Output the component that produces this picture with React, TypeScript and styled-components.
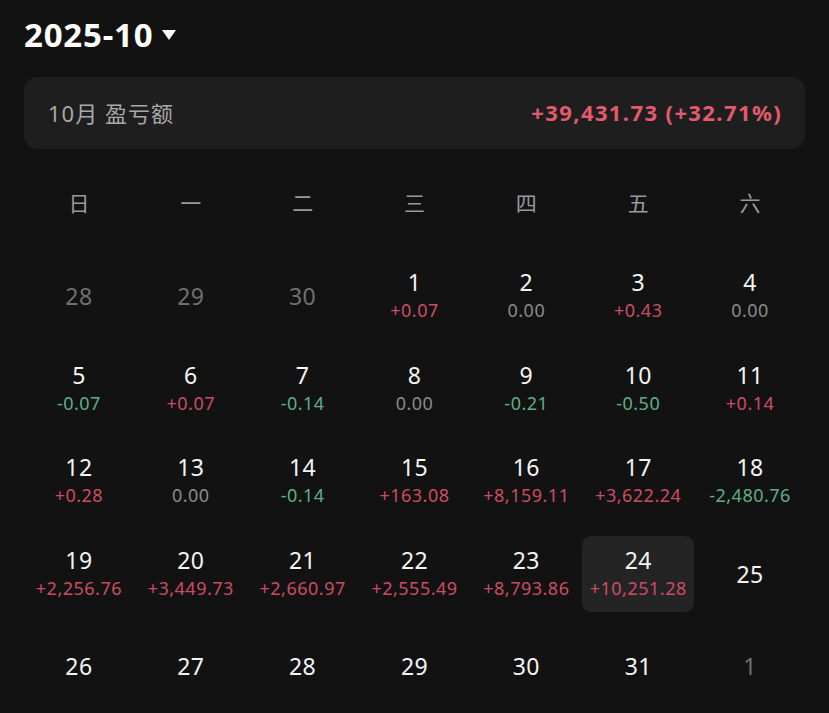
import styled, { createGlobalStyle } from 'styled-components';

const GlobalStyle = createGlobalStyle`
  html, body {
    margin: 0;
    padding: 0;
    background: #121212;
  }
  body {
    font-family: "Noto Sans", "Noto Sans CJK SC", sans-serif;
  }
`;

const Page = styled.div`
  padding: 15px 23px 0 23px;
  width: 829px;
  box-sizing: border-box;
`;

const MonthPicker = styled.div`
  display: flex;
  align-items: center;
  gap: 9px;
  height: 38px;
  padding-left: 1px;
  color: #ffffff;
  font-size: 33px;
  font-weight: 700;
  letter-spacing: 0.8px;
`;

const Caret = styled.span`
  width: 0;
  height: 0;
  border-left: 7px solid transparent;
  border-right: 7px solid transparent;
  border-top: 10px solid #ffffff;
  margin-top: 1px;
`;

const SummaryCard = styled.div`
  margin-top: 24px;
  height: 72px;
  margin-right: 1px;
  margin-left: 1px;
  border-radius: 14px;
  background: #1e1e1e;
  display: flex;
  align-items: center;
  justify-content: space-between;
  padding: 0 23px 3px 24px;
  box-sizing: border-box;
`;

const SummaryLabel = styled.span`
  color: #a8a8a8;
  font-size: 22px;
  letter-spacing: 1px;
`;

const SummaryValue = styled.span`
  color: #e35a6e;
  font-size: 22px;
  font-weight: 700;
  letter-spacing: 1.4px;
`;

const WeekRow = styled.div`
  margin-top: 29px;
  display: grid;
  grid-template-columns: repeat(7, 1fr);
  height: 50px;
  align-items: center;
`;

const WeekDay = styled.span`
  text-align: center;
  color: #9a9a9a;
  font-size: 21px;
  margin-top: -2px;
`;

const DayGrid = styled.div`
  margin-top: 30px;
  display: grid;
  grid-template-columns: repeat(7, 1fr);
  grid-auto-rows: 76px;
  row-gap: 16.5px;
`;

const DayCell = styled.div<{ $active?: boolean }>`
  display: flex;
  flex-direction: column;
  align-items: center;
  justify-content: center;
  border-radius: 9px;
  background: ${p => (p.$active ? '#242424' : 'transparent')};
`;

const DayNumber = styled.span<{ $muted?: boolean }>`
  color: ${p => (p.$muted ? '#6f6f6f' : '#f4f4f4')};
  font-size: 23px;
  line-height: 28px;
  letter-spacing: 0.4px;
`;

const DayValue = styled.span<{ $tone: 'up' | 'down' | 'flat' }>`
  color: ${p => (p.$tone === 'up' ? '#cc4c64' : p.$tone === 'down' ? '#5fae85' : '#8a8a8a')};
  font-size: 18px;
  line-height: 28px;
  letter-spacing: 0.5px;
`;

type Day = { n: number; muted?: boolean; v?: string; active?: boolean };

const WEEK = ['日', '一', '二', '三', '四', '五', '六'];

const DAYS: Day[] = [
  { n: 28, muted: true }, { n: 29, muted: true }, { n: 30, muted: true },
  { n: 1, v: '+0.07' }, { n: 2, v: '0.00' }, { n: 3, v: '+0.43' }, { n: 4, v: '0.00' },
  { n: 5, v: '-0.07' }, { n: 6, v: '+0.07' }, { n: 7, v: '-0.14' }, { n: 8, v: '0.00' },
  { n: 9, v: '-0.21' }, { n: 10, v: '-0.50' }, { n: 11, v: '+0.14' },
  { n: 12, v: '+0.28' }, { n: 13, v: '0.00' }, { n: 14, v: '-0.14' }, { n: 15, v: '+163.08' },
  { n: 16, v: '+8,159.11' }, { n: 17, v: '+3,622.24' }, { n: 18, v: '-2,480.76' },
  { n: 19, v: '+2,256.76' }, { n: 20, v: '+3,449.73' }, { n: 21, v: '+2,660.97' },
  { n: 22, v: '+2,555.49' }, { n: 23, v: '+8,793.86' }, { n: 24, v: '+10,251.28', active: true },
  { n: 25 },
  { n: 26 }, { n: 27 }, { n: 28 }, { n: 29 }, { n: 30 }, { n: 31 }, { n: 1, muted: true },
];

const toneOf = (v: string): 'up' | 'down' | 'flat' =>
  v.startsWith('+') ? 'up' : v.startsWith('-') ? 'down' : 'flat';

export default function App() {
  return (
    <>
      <GlobalStyle />
      <Page>
        <MonthPicker>
          <span>2025-10</span>
          <Caret />
        </MonthPicker>

        <SummaryCard>
          <SummaryLabel>10月 盈亏额</SummaryLabel>
          <SummaryValue>+39,431.73 (+32.71%)</SummaryValue>
        </SummaryCard>

        <WeekRow>
          {WEEK.map(w => (
            <WeekDay key={w}>{w}</WeekDay>
          ))}
        </WeekRow>

        <DayGrid>
          {DAYS.map((d, i) => (
            <DayCell key={i} $active={d.active}>
              <DayNumber $muted={d.muted}>{d.n}</DayNumber>
              {d.v && <DayValue $tone={toneOf(d.v)}>{d.v}</DayValue>}
            </DayCell>
          ))}
        </DayGrid>
      </Page>
    </>
  );
}
